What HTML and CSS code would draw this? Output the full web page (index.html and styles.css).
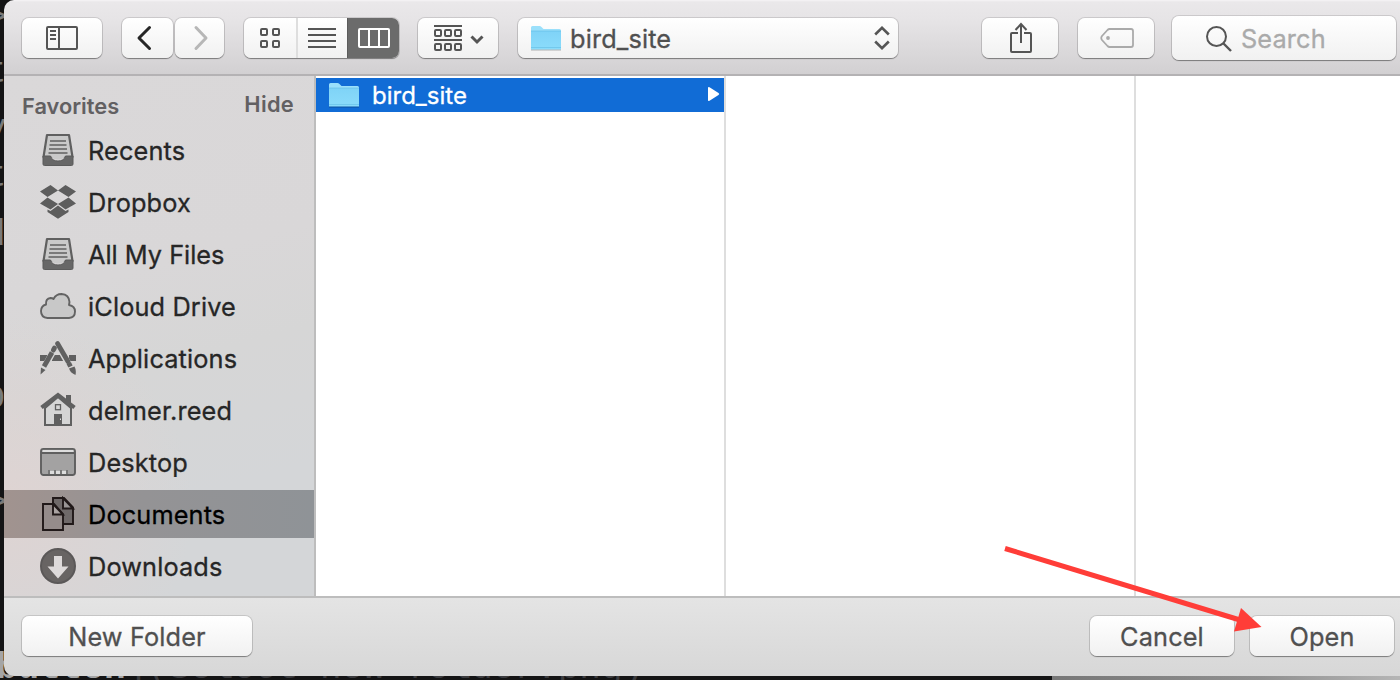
FILE: index.html
```html
<!DOCTYPE html>
<html lang="en">
<head>
<meta charset="utf-8">
<title>Open</title>
<link rel="stylesheet" href="styles.css">
</head>
<body>
<svg width="0" height="0" class="defs">
  <defs>
    <linearGradient id="folderFill" x1="0" y1="0" x2="0" y2="1"><stop offset="0" stop-color="#7fd3f7"/><stop offset="1" stop-color="#8bdcfb"/></linearGradient>
    <symbol id="folder" viewBox="0 0 32 26">
      <path d="M1 24.800h30" stroke="#000" stroke-opacity=".25" stroke-width="1.500"/>
      <path d="M1 2.500Q1 1 2.500 1H9.500Q10.500 1 11.500 2L13.500 4H29.500Q31 4 31 5.500V24H1Z" fill="#9be0fb"/>
      <path d="M1 6H31V24.500H1Z" fill="url(#folderFill)"/>
      <path d="M1 6H31M1 22.500H31" stroke="#62bce4" stroke-opacity=".6"/>
    </symbol>
    <symbol id="tray" viewBox="0 0 36 36">
      <path d="M7 3H29L32.500 25H3.500Z" fill="#c9c9c9" stroke="#606060" stroke-width="2.200" stroke-linejoin="round"/>
      <path d="M10 9H26M9.500 13H26.500M9 17H27M8.500 21H27.500" stroke="#606060" stroke-width="1.700"/>
      <path d="M3 24H10.500Q12 29 18 29T25.500 24H33V32Q33 33.500 31.500 33.500H4.500Q3 33.500 3 32Z" fill="#676767" stroke="#5b5b5b"/>
      <path d="M11 23.700H25Q24 27.500 18 27.500T11 23.700Z" fill="#c9c9c9"/>
    </symbol>
  </defs>
</svg>
<div class="backdrop">
  <span class="frag f1">&gt;</span><span class="frag f2">t</span><span class="frag f3">y</span><span class="frag f4">t</span><span class="frag f5">d</span><span class="frag f6">p</span><span class="frag f7">&gt;</span>
  <div class="code"><b>button</b>](Select new folder.png)</div>
  <div class="pane"></div>
</div>
<main class="dialog">
  <header class="toolbar">
    <button class="btn sidebar-toggle"><svg width="32" height="24" fill="none" stroke="#555" stroke-width="2"><rect x="1" y="1" width="30" height="22" rx="1"/><path d="M13 1V23M4 5H10M4 9H10M4 13H10"/></svg></button>
    <div class="nav">
      <button class="btn back"><svg width="16" height="26" fill="none" stroke="#262626" stroke-width="3" stroke-linecap="round" stroke-linejoin="round"><path d="M13.500 2.500L3 13L13.500 23.500"/></svg></button>
      <button class="btn forward"><svg width="16" height="26" fill="none" stroke="#b7b7b7" stroke-width="3" stroke-linecap="round" stroke-linejoin="round"><path d="M3 2.500L13 13L3 23.500"/></svg></button>
    </div>
    <div class="btn views">
      <span class="seg s1"><svg width="20" height="20" fill="none" stroke="#555" stroke-width="2"><rect x="1" y="1" width="6" height="6" rx="1"/><rect x="13" y="1" width="6" height="6" rx="1"/><rect x="1" y="13" width="6" height="6" rx="1"/><rect x="13" y="13" width="6" height="6" rx="1"/></svg></span>
      <span class="seg s2"><svg width="28" height="20" stroke="#555" stroke-width="2"><path d="M0 1H28M0 7H28M0 13H28M0 19H28"/></svg></span>
      <span class="seg s3"><svg width="32" height="20" fill="none" stroke="#fff" stroke-width="2"><rect x="1" y="1" width="30" height="18" rx="1"/><path d="M11 1V19M21 1V19"/></svg></span>
    </div>
    <button class="btn group"><svg width="52" height="26" fill="none" stroke="#555" stroke-width="2"><path d="M0 1H28M0 15H28"/><rect x="1" y="5" width="6" height="6" rx="1"/><rect x="11" y="5" width="6" height="6" rx="1"/><rect x="21" y="5" width="6" height="6" rx="1"/><rect x="1" y="19" width="6" height="6" rx="1"/><rect x="11" y="19" width="6" height="6" rx="1"/><rect x="21" y="19" width="6" height="6" rx="1"/><path d="M37.500 11.500L43 17L48.500 11.500" stroke-width="3"/></svg></button>
    <button class="btn popup"><svg class="folder" width="32" height="26"><use href="#folder"/></svg><span class="t t-popup">bird_site</span><svg class="updown" width="16" height="24" fill="none" stroke="#555" stroke-width="2.600"><path d="M1.200 8.500L8 1.800L14.800 8.500M1.200 15.500L8 22.200L14.800 15.500"/></svg></button>
    <button class="btn share"><svg width="24" height="32" fill="none" stroke="#555" stroke-width="2"><path d="M9 11H3Q2 11 2 12V29Q2 30 3 30H21Q22 30 22 29V12Q22 11 21 11H15M12 2V21M6.500 8L12 2L17.500 8"/></svg></button>
    <button class="btn tag"><svg width="34" height="20" fill="none" stroke="#aaa" stroke-width="1.800"><path d="M9.500 1H31Q33 1 33 3V17Q33 19 31 19H9.500Q8.500 19 7.500 18L2 12Q.5 10 2 8L7.500 2Q8.500 1 9.500 1Z"/><circle cx="8" cy="10" r="1.900" fill="#aaa" stroke="none"/></svg></button>
    <div class="btn search"><svg width="26" height="26" fill="none" stroke="#555" stroke-width="2"><circle cx="10.500" cy="10.500" r="9.500"/><path d="M17.500 17.500L25 25" stroke-width="2.400"/></svg><span class="t t-search">Search</span></div>
  </header>
  <section class="body">
    <nav class="sidebar">
      <div class="side-head"><span class="t-fav">Favorites</span><span class="t-hide">Hide</span></div>
      <ul class="places">
        <li><svg width="36" height="36"><use href="#tray"/></svg><span class="t">Recents</span></li>
        <li><svg width="36" height="36" fill="#5d5d5d"><path d="M10.500 1L18 6.500L7.500 13L0 7.500ZM25.500 1L36 7.500L28.500 13L18 6.500ZM7.500 13.500L18 20L10.500 25.500L0 19.500ZM28.500 13.500L36 19.500L25.500 25.500L18 20ZM18 21.500L25.500 27L28.500 25.500V28L18 34.800L7.500 28V25.500L10.500 27Z"/></svg><span class="t">Dropbox</span></li>
        <li><svg width="36" height="36"><use href="#tray"/></svg><span class="t all-files">All My Files</span></li>
        <li><svg width="36" height="36"><path d="M7.500 30Q1 29.500 1 23Q1 18 6 16.500Q5.500 10.500 10.500 10Q12.500 10 13.500 11Q16 6 21.500 6Q29 6.500 29.500 14L29 17Q35 18 35 23.500Q35 29.500 29 30Z" fill="#c8c8c8" stroke="#636363" stroke-width="1.900" stroke-linejoin="round"/></svg><span class="t">iCloud Drive</span></li>
        <li><svg width="36" height="36" fill="none" stroke="#606060"><path d="M0 18H7M12 18H24M29 18H36" stroke-width="6"/><path d="M17.500 4L29 25M15 8L3 30" stroke="#d6d6d6" stroke-width="6.500"/><path d="M17.500 3.500L28 21.500" stroke-width="4.800" stroke-linecap="round"/><path d="M28.700 23L30.500 26.500" stroke-width="4.800"/><path d="M29 28.500L34.500 26.500Q36.500 30 35.500 35Q30.500 33 29 28.500Z" fill="#606060" stroke="none"/><path d="M14.500 8L13.300 10.200" stroke-width="4.800" stroke-linecap="round"/><path d="M12 12.500L4 26.500" stroke-width="4.800"/><path d="M1 27.500L5.500 30L.5 34.500Z" fill="#606060" stroke="none"/></svg><span class="t">Applications</span></li>
        <li><svg width="36" height="36"><path d="M5 16L18 5L31 16V33H5Z" fill="#d5d5d5" stroke="#606060" stroke-width="2"/><path d="M26 3H31V12L26 8Z" fill="#606060"/><path d="M1.500 15.500L18 3L34.500 15.500" fill="none" stroke="#606060" stroke-width="4"/><rect x="15.500" y="12.700" width="5" height="5" fill="none" stroke="#606060" stroke-width="1.300"/><path d="M14 22H22V33H14Z" fill="#606060"/><path d="M20.500 26.500V28" stroke="#ddd"/></svg><span class="t">delmer.reed</span></li>
        <li><svg width="36" height="36"><rect x="1" y="5" width="34" height="26" rx="2.500" fill="#a3a2a2" stroke="#5f5f5f" stroke-width="1.900"/><path d="M2.500 7H33.500" stroke="#ddd" stroke-width="2.200"/><path d="M1 9H35" stroke="#5f5f5f" stroke-width="1.800"/><path d="M8 26H28V30H8Z" fill="#777"/><path d="M10 26.500H14V30H10ZM16 26.500H20V30H16ZM22 26.500H26V30H22Z" fill="#ddd"/></svg><span class="t">Desktop</span></li>
        <li class="selected"><svg width="36" height="36" stroke="#211919" stroke-width="1.900"><path d="M13 2H24L33 11.500V28H13Z" fill="#6f6969"/><path d="M23 2V12.500H33Z" fill="#999494"/><path d="M3 8H14L23 18V34H3Z" fill="#958c8b"/><path d="M13 8V18.500H23Z" fill="#aaa3a2"/></svg><span class="t">Documents</span></li>
        <li><svg width="36" height="36"><circle cx="18" cy="18" r="17" fill="#686463" stroke="#5b5858" stroke-width="2"/><path d="M14 8H22V18.500H28.500L18 30.500L7.500 18.500H14Z" fill="#dedada"/></svg><span class="t">Downloads</span></li>
      </ul>
    </nav>
    <div class="column first">
      <div class="row"><svg width="32" height="26"><use href="#folder"/></svg><span class="t t-row">bird_site</span><svg class="tri" width="13" height="16"><path d="M1 2Q1 .5 2.500 1.300L11.500 7Q13 8 11.500 9L2.500 14.700Q1 15.500 1 14Z" fill="#fff"/></svg></div>
    </div>
    <div class="column second"></div>
    <div class="column third"></div>
  </section>
  <footer class="footer">
    <button class="btn new"><span class="t">New Folder</span></button>
    <button class="btn cancel"><span class="t">Cancel</span></button>
    <button class="btn open"><span class="t">Open</span></button>
  </footer>
</main>
<svg class="pointer" width="264" height="90"><path d="M5 8.500L240 80" stroke="#ff3d38" stroke-width="5"/><path d="M241 68L261.500 87L234 91.500Z" fill="#ff3d38"/></svg>
</body>
</html>
```
FILE: styles.css
```css
* { box-sizing: border-box; }
body { margin: 0; width: 1400px; height: 680px; overflow: hidden; position: relative; background: #141415; font-family: Inter, "Liberation Sans", sans-serif; }
svg { display: block; flex: none; }
.defs { position: absolute; }
button { border: 0; padding: 0; font: inherit; }

.backdrop { position: absolute; inset: 0; overflow: hidden; font: 36px/40px "Liberation Mono", monospace; color: #3b3b3e; white-space: pre; }
.frag { position: absolute; left: -15px; color: #7a7a7a; }
.f1 { top: -1px; left: -15px; }
.f2 { top: 53px; }
.f3 { top: 110px; }
.f4 { top: 157px; }
.f5 { top: 216px; left: -16px; }
.f6 { top: 378px; left: -16px; }
.f7 { top: 484px; left: -15px; }
.code { position: absolute; left: -4px; top: 649px; }
.code b { color: #a5a5a5; }
.pane { position: absolute; left: 1052px; top: 660px; width: 348px; height: 20px; background: linear-gradient(90deg, #777, #909090 60%, #b5b5b5); }

.dialog { position: absolute; left: 4px; top: 0; width: 1396px; height: 676px; display: flex; flex-direction: column; border-radius: 10px 0 0 10px; overflow: hidden; }
.toolbar { height: 76px; flex: none; display: flex; align-items: center; padding-left: 18px; border-bottom: 2px solid #b4b2b4; background: linear-gradient(#f6f4f6 0, #eae8ea 2px, #e6e4e6 20px, #d2d0d2); }
.btn { display: flex; align-items: center; height: 40px; border-radius: 7px; background: linear-gradient(#fff, #f1f1f1); box-shadow: 0 0 0 1px rgba(0,0,0,.12), 0 1px 1px rgba(0,0,0,.35); color: #505050; }
.toolbar .btn { margin-top: 2px; }
.sidebar-toggle { width: 80px; padding-left: 24px; }
.nav { display: flex; gap: 2px; margin-left: 20px; }
.back { width: 51px; padding-left: 14px; }
.forward { width: 49px; padding-left: 18px; }
.views { width: 155px; margin-left: 20px; overflow: hidden; }
.seg { height: 40px; display: flex; align-items: center; }
.s1 { width: 54px; padding-left: 16px; border-right: 2px solid #dedede; }
.s2 { width: 49px; padding-left: 10px; }
.s3 { width: 52px; padding-left: 10px; background: #6b6b6b; border-left: 1px solid #5c5c5c; }
.group { width: 80px; margin-left: 19px; padding-left: 16px; }
.popup { width: 380px; margin-left: 20px; padding-left: 12px; }
.updown { margin-left: auto; margin-right: 8px; }
.share { width: 76px; margin-left: 84px; padding-left: 27px; }
.tag { width: 76px; margin-left: 20px; padding-left: 22px; }
.toolbar .search { width: 224px; height: 44px; margin-left: 18px; padding-left: 34px; }
.search svg { margin-top: 2px; }

.t { font-size: 25.3px; line-height: 32px; padding-top: 2px; letter-spacing: .14px; white-space: pre; display: block; -webkit-text-stroke: .3px currentColor; }
.all-files { letter-spacing: 0; }
.t-popup { margin-left: 8px; }
.t-search { margin-left: 9px; color: #aaa; }

.body { height: 520px; display: flex; background: #fff; }
.sidebar { width: 312px; flex: none; border-right: 2px solid #bdbdbd; background: radial-gradient(circle at 0 430px, rgba(225,211,209,.8), rgba(225,211,209,0) 190px), linear-gradient(165deg, #dad8d9, #d9d7d8 38%, #d6d6d6 55%, #d4d6d8 78%); }
.side-head { height: 50px; display: flex; justify-content: space-between; padding: 0 20px 0 18px; font-size: 21.800px; font-weight: 600; line-height: 28px; color: #626062; }
.t-fav { padding-top: 16px; }
.t-hide { padding-top: 14px; letter-spacing: .3px; }
.places { list-style: none; margin: 0; padding: 0; display: flex; flex-direction: column; gap: 4px; }
.places li { height: 48px; display: flex; align-items: center; gap: 12px; padding-left: 36px; color: #262626; }
.places .selected { background: linear-gradient(90deg, #a1938f, #949395 45%, #8f9397); color: #000; }
.column { border-right: 2px solid #dedede; padding-top: 2px; }
.first, .second { width: 410px; flex: none; }
.third { flex: 1; border: 0; }
.row { height: 34px; display: flex; align-items: center; padding-left: 12px; background: #116cd6; color: #fff; }
.t-row { margin-left: 12px; font-size: 24px; letter-spacing: 0; }
.tri { margin-left: auto; margin-right: 4px; margin-bottom: 2px; }

.footer { height: 80px; flex: none; display: flex; align-items: center; padding: 0 6px 0 18px; border-top: 2px solid #bdbdbd; background: linear-gradient(#e4e4e4, #d7d7d7); }
.footer .btn { justify-content: center; margin-bottom: 2px; }
.new { width: 230px; }
.cancel { width: 144px; margin-left: auto; }
.open { width: 144px; margin-left: 16px; }

.pointer { position: absolute; left: 1000px; top: 540px; overflow: visible; }
```
